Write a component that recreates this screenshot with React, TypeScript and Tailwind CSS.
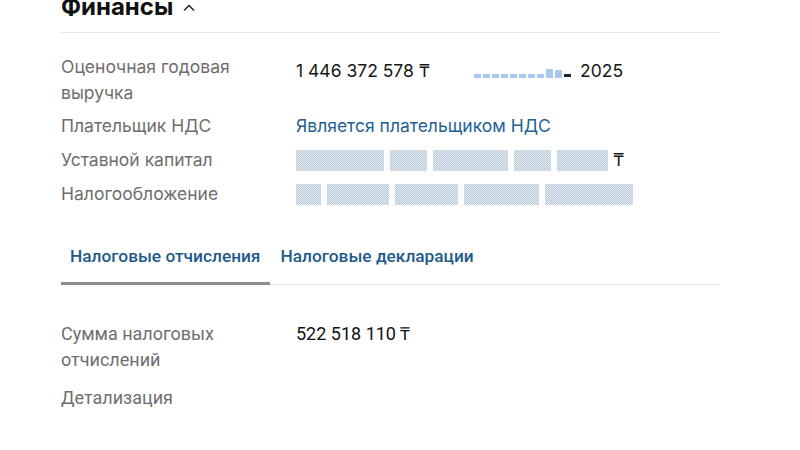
const Masked = ({ widths }: { widths: number[] }) => (
  <div className="flex items-center gap-[6px] h-[26px]">
    {widths.map((w, i) => (
      <svg key={i} width={w} height={21} shapeRendering="crispEdges" className="block">
        <defs>
          <pattern id={`dots-${w}-${i}`} width="2" height="2" patternUnits="userSpaceOnUse">
            <rect x="0" y="0" width="2" height="2" fill="#e4ebf1" />
            <rect x="0" y="0" width="1" height="1" fill="#b9c8d6" />
            <rect x="1" y="1" width="1" height="1" fill="#b9c8d6" />
          </pattern>
        </defs>
        <rect width={w} height={21} fill={`url(#dots-${w}-${i})`} />
      </svg>
    ))}
  </div>
);

const bars = [4, 4, 4, 4, 4, 4, 4, 4, 9, 8];

const Row = ({
  label,
  children,
  className = "",
}: {
  label: React.ReactNode;
  children: React.ReactNode;
  className?: string;
}) => (
  <div className={`flex ${className}`}>
    <div className="w-[235px] shrink-0 text-[#6e6e6e]">{label}</div>
    <div className="flex-1">{children}</div>
  </div>
);

export default function App() {
  return (
    <div className="w-[800px] h-[450px] bg-white overflow-hidden font-['Inter',sans-serif]">
      <div className="ml-[61px] w-[659px]">
        <div className="-mt-[9px] pb-[9px] border-b border-[#e6e6e6]">
          <div className="h-[32px] flex items-center gap-[10px]">
            <h2 className="text-[24px] font-bold text-[#111] leading-[32px]">Финансы</h2>
            <svg width="12" height="8" viewBox="0 0 12 8" className="mt-[1px]">
              <path d="M1 6.5 6 1.5l5 5" fill="none" stroke="#222" strokeWidth="1.5" />
            </svg>
          </div>
        </div>

        <div className="pt-[21px] flex flex-col gap-[7px] text-[17.5px] leading-[26px]">
          <Row label={<>Оценочная годовая<br />выручка</>}>
            <div className="flex items-center pt-[4px] text-[#161616]">
              <span>1 446 372 578 ₸</span>
              <div className="ml-[44px] flex items-end gap-[2px] h-[12px] mt-[2px]">
                {bars.map((h, i) => (
                  <div key={i} className="w-[7px] bg-[#a8c9ef]" style={{ height: h }} />
                ))}
                <div className="w-[7px] h-[3px] mb-[1px] bg-[#1f2630]" />
              </div>
              <span className="ml-[9px]">2025</span>
            </div>
          </Row>
          <Row label="Плательщик НДС">
            <span className="text-[#1f6193]">Является плательщиком НДС</span>
          </Row>
          <Row label="Уставной капитал" className="mt-[1px]">
            <div className="flex items-center gap-[5px] text-[#161616]">
              <Masked widths={[88, 37, 75, 37, 51]} />
              <span>₸</span>
            </div>
          </Row>
          <Row label="Налогообложение" className="mt-[1px]">
            <Masked widths={[25, 62, 63, 75, 88]} />
          </Row>
        </div>

        <div className="mt-[38px] font-['Roboto',sans-serif]">
          <div className="flex border-b border-[#e8e8e8] text-[17.3px] font-medium text-[#1d5a8a] leading-[22px]">
            <div className="pl-[9px] pr-[10px] pb-[15px] border-b-[3px] border-[#8c8c8c] -mb-[1px]">
              Налоговые отчисления
            </div>
            <div className="px-[10px] pb-[15px]">Налоговые декларации</div>
          </div>

          <div className="pt-[36px] flex flex-col gap-[12px] text-[18px] leading-[26px]">
            <Row label={<>Сумма налоговых<br />отчислений</>}>
              <span className="text-[#111]">522 518 110 ₸</span>
            </Row>
            <Row label="Детализация">
              <span />
            </Row>
          </div>
        </div>
      </div>
    </div>
  );
}
